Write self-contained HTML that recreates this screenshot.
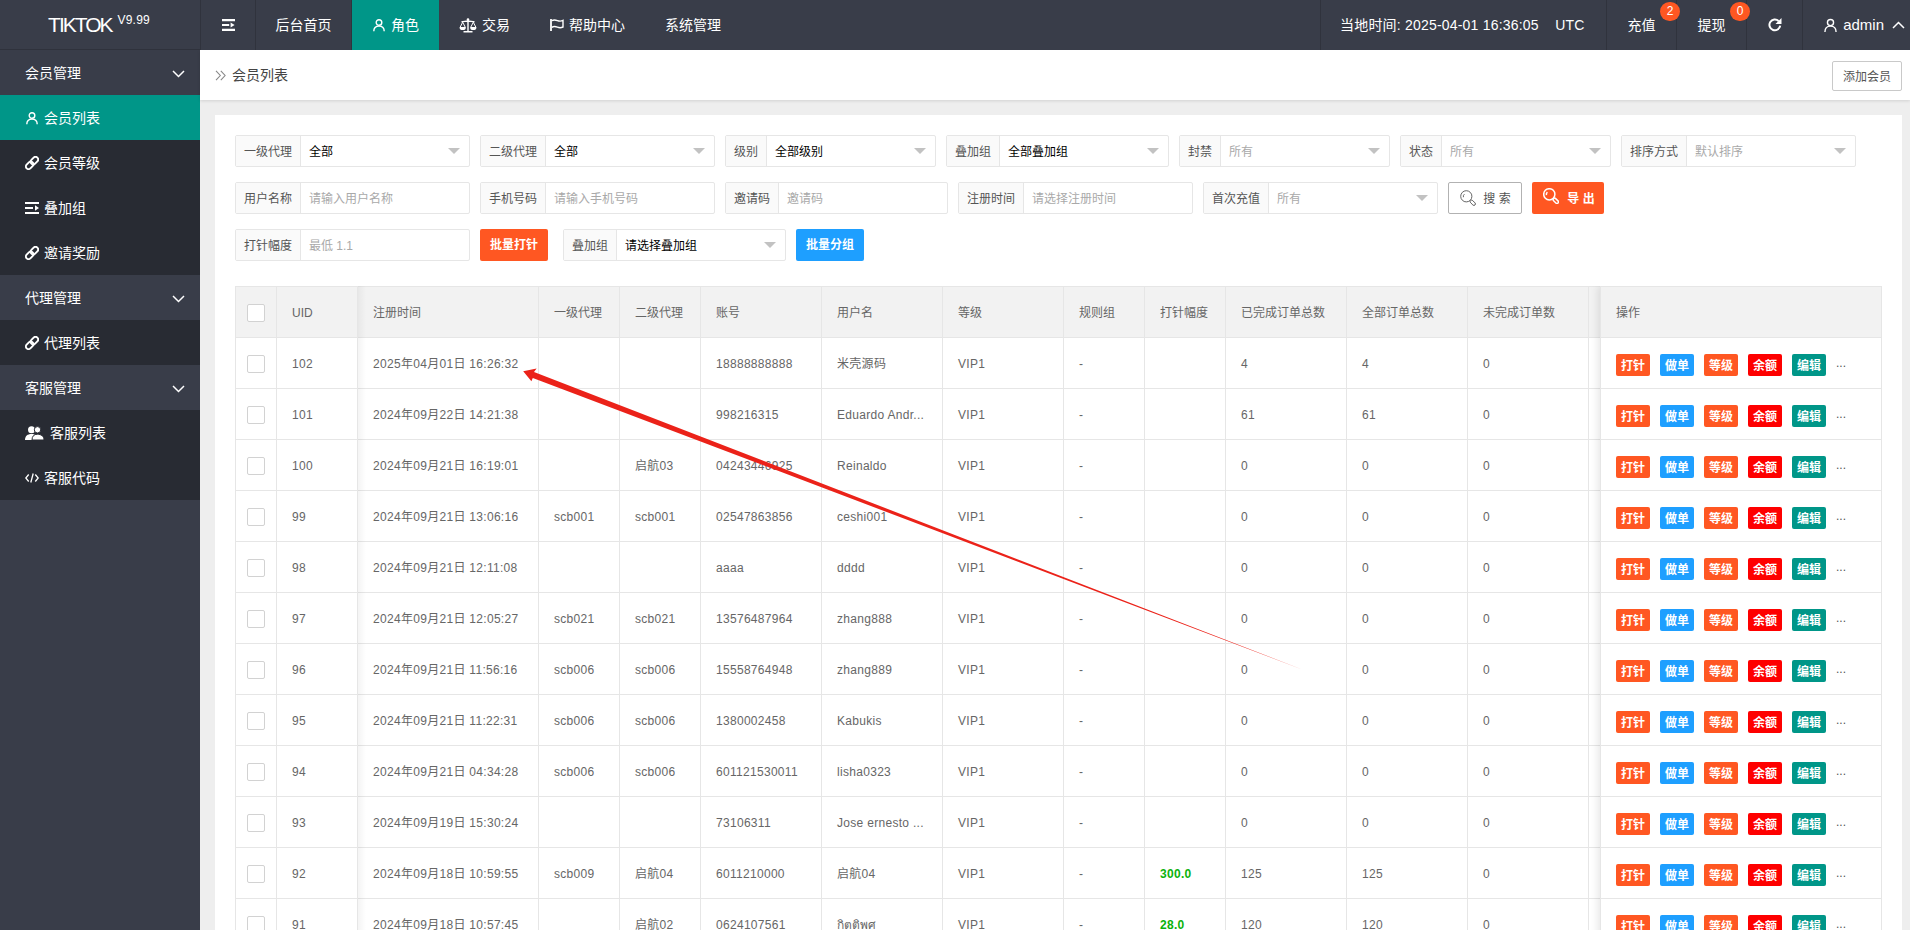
<!DOCTYPE html>
<html lang="zh-CN">
<head>
<meta charset="utf-8">
<title>会员列表</title>
<style>
*{box-sizing:border-box;margin:0;padding:0}
html,body{width:1910px;height:930px;overflow:hidden}
body{font-family:"Liberation Sans","Noto Sans CJK SC",sans-serif;font-size:12px;color:#333;background:#eee;position:relative}
svg{display:block}
a{color:inherit;text-decoration:none}
/* ---------- header ---------- */
.hd{position:absolute;left:0;top:0;width:1910px;height:50px;background:#393d49;color:#fff;font-size:14px;z-index:10}
.logo{position:absolute;left:0;top:0;width:200px;height:50px;text-align:center;line-height:49px;font-size:21px;letter-spacing:-2px;padding-right:2px;border-bottom:1px solid #2f323c}
.logo sup{font-size:12px;letter-spacing:.2px;position:relative;top:0px;margin-left:6px;vertical-align:super;line-height:0}
.nav{position:absolute;top:0;height:50px;line-height:50px;white-space:nowrap;text-align:center}
.nav.bl{border-left:1px solid #30333d}
.nav.br{border-right:1px solid #30333d}
.nav.on{background:#009688}
.nav.l{text-align:left}
.nav svg{display:inline-block;vertical-align:middle;position:relative;top:-1px}
.badge{position:absolute;width:20px;height:19px;border-radius:9.500px;background:#ff5722;color:#fff;font-size:12px;line-height:19px;text-align:center;top:1.500px}
/* ---------- sidebar ---------- */
.side{position:absolute;left:0;top:50px;width:200px;height:880px;background:#393d49;color:#fff;font-size:14px}
.side .it{position:absolute;left:0;width:200px;height:45px;line-height:46px;padding-left:25px;white-space:nowrap}
.side .sub{background:#282b33}
.side .on{background:#009688}
.side .it svg{display:inline-block;vertical-align:middle;position:relative;top:-1px;margin-right:5px}
.side .it svg.chev{position:absolute;left:172px;top:20px;margin:0}
/* ---------- breadcrumb ---------- */
.crumb{position:absolute;left:200px;top:50px;width:1710px;height:50px;background:#fff;box-shadow:0 1px 3px rgba(0,0,0,.12);font-size:14px;color:#444;line-height:50px}
.crumb .t{position:absolute;left:32px;top:0}
.crumb .add{position:absolute;left:1632px;top:11px;width:70px;height:30px;border:1px solid #c9c9c9;border-radius:2px;background:#fff;color:#555;font-size:12px;line-height:31px;text-align:center}
/* ---------- card ---------- */
.card{position:absolute;left:215px;top:115px;width:1687px;height:830px;background:#fff}
/* ---------- filters ---------- */
.fg{position:absolute;height:32px;border:1px solid #e6e6e6;border-radius:2px;background:#fff}
.fg label{position:absolute;left:0;top:0;height:30px;line-height:32px;background:#fafafa;border-right:1px solid #e6e6e6;text-align:center;color:#555;font-size:12px;padding-right:0}
.fg .inp{position:absolute;right:0;top:0;width:169px;height:30px;line-height:32px;padding-left:9px;color:#000;white-space:nowrap}
.fg .inp.ph{color:#a9a9a9}
.tri{position:absolute;right:9px;top:12px;width:0;height:0;border:6px solid transparent;border-top-color:#c2c2c2;border-bottom-width:0}
.btn{position:absolute;height:32px;line-height:32px;border-radius:2px;text-align:center;font-size:12px;white-space:nowrap;color:#fff;font-weight:bold}
.btn svg{display:inline-block;vertical-align:middle;margin-right:6px;position:relative;top:-1px}
.btn span{position:relative}
.btn.pri span{left:1px;top:1px}
.btn.pri{background:#fff;border:1px solid #b2b2b2;color:#555;line-height:30px;font-weight:normal}
.btn.dan{background:#ff5722}
.btn.nor{background:#1e9fff}
/* ---------- table ---------- */
.tb{position:absolute;border-collapse:separate;border-spacing:0;table-layout:fixed;border-left:1px solid #e6e6e6;border-top:1px solid #e6e6e6;color:#666;font-size:12px;background:#fff}
.tb th,.tb td{height:51px;line-height:20px;letter-spacing:.3px;border-right:1px solid #e6e6e6;border-bottom:1px solid #e6e6e6;padding:2px 0 0 15px;text-align:left;font-weight:normal;white-space:nowrap;overflow:hidden;vertical-align:middle}
.tb th{background:#f2f2f2;letter-spacing:0}
.tb .ck{padding:0;text-align:center}
.cb{display:inline-block;width:18px;height:18px;border:1px solid #d2d2d2;border-radius:2px;background:#fff;vertical-align:middle;position:relative;top:0}
.tb b.g{color:#0bb20c;font-weight:bold}
.shl{position:absolute;width:8px;height:760px;background:linear-gradient(to right,rgba(0,0,0,.045),rgba(0,0,0,0))}
.tb.fr{box-shadow:-2px 0 8px rgba(0,0,0,.1);clip-path:inset(0 0 0 -12px)}
.tb.fr td{padding-top:3px}
.b{display:inline-block;width:34px;height:22px;line-height:24px;letter-spacing:0;border-radius:2px;color:#fff;font-weight:bold;text-align:center;margin-right:10px;vertical-align:middle}
.b.dan{background:#ff5722}.b.nor{background:#1e9fff}.b.org{background:#ff5722}.b.red{background:#fe0000}.b.grn{background:#009688}
.more{vertical-align:middle;color:#555;letter-spacing:0;position:relative;top:-2px}
</style>
</head>
<body>

<div class="hd">
  <div class="logo">TIKTOK<sup>V9.99</sup></div>
  <div class="nav bl br" style="left:200px;width:56px">
    <svg width="13" height="12" viewBox="0 0 13 12" style="position:absolute;left:21px;top:19px"><path d="M0 0h13v2.200H0zM0 5h7.200v2.100H0zM0 9.700h13v2.300H0zM8.600 3.600l4 2.400-4 2.400z" fill="#fff"/></svg>
  </div>
  <div class="nav br" style="left:256px;width:96px">后台首页</div>
  <div class="nav on l" style="left:352px;width:87px;padding-left:21px">
    <svg width="12" height="13" viewBox="0 0 12 13" style="margin-right:6px;top:-1px"><circle cx="6" cy="3.500" r="2.800" fill="none" stroke="#fff" stroke-width="1.400"/><path d="M.8 12.300c0-3.300 2.100-5.200 5.200-5.200s5.200 1.900 5.200 5.200" fill="none" stroke="#fff" stroke-width="1.400"/></svg>角色</div>
  <div class="nav l" style="left:439px;width:91px;padding-left:20px">
    <svg width="18" height="15" viewBox="0 0 18 15" style="margin-right:5px;top:-1px"><path d="M9 1.500v12M4.500 13.800h9M2.500 3.800c2.500 0 4-.8 6.500-.8s4 .8 6.500 .8" fill="none" stroke="#fff" stroke-width="1.400"/><circle cx="9" cy="1.600" r="1.300" fill="#fff"/><path d="M3.700 4.200L1 9.500h5.400zM14.300 4.200l-2.700 5.300H17z" fill="none" stroke="#fff" stroke-width="1" stroke-linejoin="round"/><path d="M.6 9.500a3.100 2.600 0 0 0 6.200 0zM11.200 9.500a3.100 2.600 0 0 0 6.200 0z" fill="#fff"/></svg>交易</div>
  <div class="nav l" style="left:530px;width:115px;padding-left:20px">
    <svg width="14" height="12" viewBox="0 0 14 12" style="margin-right:5px;top:-1px"><path d="M1 0v12" stroke="#fff" stroke-width="1.800" fill="none"/><path d="M1.800 1.800c2-1.400 3.600-1 5.600-.2s3.600 .8 5.600 -.2v6.600c-2 1-3.600 1-5.600 .2s-3.600 -1.200 -5.600 .2" fill="none" stroke="#fff" stroke-width="1.400"/></svg>帮助中心</div>
  <div class="nav" style="left:645px;width:96px">系统管理</div>

  <div class="nav bl br l" style="left:1320px;width:287px;padding-left:19px;letter-spacing:.2px">当地时间: 2025-04-01 16:36:05&nbsp;&nbsp;&nbsp;&nbsp;UTC</div>
  <div class="nav br" style="left:1607px;width:70px">充值</div>
  <div class="badge" style="left:1660px">2</div>
  <div class="nav br" style="left:1677px;width:70px">提现</div>
  <div class="badge" style="left:1730px">0</div>
  <div class="nav br" style="left:1747px;width:56px">
    <svg width="16" height="16" viewBox="0 0 16 16" style="top:-1px"><path d="M13.200 8.600A5.400 5.400 0 1 1 11.600 4" fill="none" stroke="#fff" stroke-width="2"/><path d="M14.500 1v6h-6z" fill="#fff"/></svg>
  </div>
  <div class="nav" style="left:1803px;width:107px;text-align:left;padding-left:21px;font-size:15px">
    <svg width="13" height="15" viewBox="0 0 14 15" style="margin-right:2px"><circle cx="7" cy="4.300" r="3.300" fill="none" stroke="#fff" stroke-width="1.500"/><path d="M1 14.500c0-4 2.600-6.300 6-6.300s6 2.300 6 6.300" fill="none" stroke="#fff" stroke-width="1.500"/></svg>
    admin
    <svg width="13" height="8" viewBox="0 0 13 8" style="margin-left:4px"><path d="M1 7l5.500-5.500L12 7" fill="none" stroke="#fff" stroke-width="1.500"/></svg>
  </div>
</div>

<div class="side">
  <div class="it" style="top:0">会员管理<svg class="chev" width="13" height="8" viewBox="0 0 13 8"><path d="M1 1l5.500 5.500L12 1" fill="none" stroke="#fff" stroke-width="1.500"/></svg></div>
  <div class="it sub on" style="top:45px"><svg width="12" height="13" viewBox="0 0 12 13" style="margin-left:1px;margin-right:6px"><circle cx="6" cy="3.500" r="2.800" fill="none" stroke="#fff" stroke-width="1.400"/><path d="M.8 12.300c0-3.300 2.100-5.200 5.200-5.200s5.200 1.900 5.200 5.200" fill="none" stroke="#fff" stroke-width="1.400"/></svg>会员列表</div>
  <div class="it sub" style="top:90px"><svg width="14" height="14" viewBox="0 0 15 15"><g transform="rotate(-45 7.500 7.500)" fill="none" stroke="#fff" stroke-width="2.100"><rect x="-.6" y="4.700" width="9" height="5.600" rx="2.800"/><rect x="6.600" y="4.700" width="9" height="5.600" rx="2.800"/></g></svg>会员等级</div>
  <div class="it sub" style="top:135px"><svg width="14" height="12" viewBox="0 0 14 12" style="top:-1px"><path d="M0 0h14v2H0zM0 5h8v2H0zM0 10h14v2H0zM10 3.200l4 2.800-4 2.800z" fill="#fff"/></svg>叠加组</div>
  <div class="it sub" style="top:180px"><svg width="14" height="14" viewBox="0 0 15 15"><g transform="rotate(-45 7.500 7.500)" fill="none" stroke="#fff" stroke-width="2.100"><rect x="-.6" y="4.700" width="9" height="5.600" rx="2.800"/><rect x="6.600" y="4.700" width="9" height="5.600" rx="2.800"/></g></svg>邀请奖励</div>
  <div class="it" style="top:225px">代理管理<svg class="chev" width="13" height="8" viewBox="0 0 13 8"><path d="M1 1l5.500 5.500L12 1" fill="none" stroke="#fff" stroke-width="1.500"/></svg></div>
  <div class="it sub" style="top:270px"><svg width="14" height="14" viewBox="0 0 15 15"><g transform="rotate(-45 7.500 7.500)" fill="none" stroke="#fff" stroke-width="2.100"><rect x="-.6" y="4.700" width="9" height="5.600" rx="2.800"/><rect x="6.600" y="4.700" width="9" height="5.600" rx="2.800"/></g></svg>代理列表</div>
  <div class="it" style="top:315px">客服管理<svg class="chev" width="13" height="8" viewBox="0 0 13 8"><path d="M1 1l5.500 5.500L12 1" fill="none" stroke="#fff" stroke-width="1.500"/></svg></div>
  <div class="it sub" style="top:360px"><svg width="19" height="14" viewBox="0 0 19 14" style="margin-right:6px"><g fill="#fff"><circle cx="6.500" cy="3.800" r="3.500"/><path d="M0 14c0-4 2.500-6 6.500-6s6.500 2 6.500 6z"/><circle cx="12.500" cy="3.800" r="3.200" stroke="#282b33" stroke-width="1"/><path d="M7 14c0-3.800 2-5.800 5.500-5.800S19 10.200 19 14z" stroke="#282b33" stroke-width="1"/></g></svg>客服列表</div>
  <div class="it sub" style="top:405px"><svg width="14" height="10" viewBox="0 0 14 10"><path d="M3.700 1.500L.8 5l2.900 3.500M10.300 1.500L13.200 5l-2.900 3.500M8.200.5L5.800 9.500" fill="none" stroke="#fff" stroke-width="1.300"/></svg>客服代码</div>
</div>

<div class="crumb">
  <svg width="11" height="11" viewBox="0 0 11 11" style="position:absolute;left:15px;top:20px"><path d="M1 .8L5.300 5.500 1 10.200M5.800 .8l4.300 4.700-4.300 4.700" fill="none" stroke="#888" stroke-width="1.100"/></svg>
  <span class="t">会员列表</span>
  <div class="add">添加会员</div>
</div>

<div class="card">
<!--F0-->
<div class="fg" style="left:20px;top:20px;width:235px"><label style="width:65px">一级代理</label><div class="inp sel">全部<i class="tri"></i></div></div>
<div class="fg" style="left:265px;top:20px;width:235px"><label style="width:65px">二级代理</label><div class="inp sel">全部<i class="tri"></i></div></div>
<div class="fg" style="left:510px;top:20px;width:211px"><label style="width:41px">级别</label><div class="inp sel">全部级别<i class="tri"></i></div></div>
<div class="fg" style="left:731px;top:20px;width:223px"><label style="width:53px">叠加组</label><div class="inp sel">全部叠加组<i class="tri"></i></div></div>
<div class="fg" style="left:964px;top:20px;width:211px"><label style="width:41px">封禁</label><div class="inp sel ph">所有<i class="tri"></i></div></div>
<div class="fg" style="left:1185px;top:20px;width:211px"><label style="width:41px">状态</label><div class="inp sel ph">所有<i class="tri"></i></div></div>
<div class="fg" style="left:1406px;top:20px;width:235px"><label style="width:65px">排序方式</label><div class="inp sel ph">默认排序<i class="tri"></i></div></div>
<div class="fg" style="left:20px;top:67px;width:235px"><label style="width:65px">用户名称</label><div class="inp ph">请输入用户名称</div></div>
<div class="fg" style="left:265px;top:67px;width:235px"><label style="width:65px">手机号码</label><div class="inp ph">请输入手机号码</div></div>
<div class="fg" style="left:510px;top:67px;width:223px"><label style="width:53px">邀请码</label><div class="inp ph">邀请码</div></div>
<div class="fg" style="left:743px;top:67px;width:235px"><label style="width:65px">注册时间</label><div class="inp ph">请选择注册时间</div></div>
<div class="fg" style="left:988px;top:67px;width:235px"><label style="width:65px">首次充值</label><div class="inp sel ph">所有<i class="tri"></i></div></div>
<div class="btn pri" style="left:1233px;top:67px;width:74px"><svg width="16" height="16" viewBox="0 0 16 16" style="top:-1px"><circle cx="6.300" cy="6.300" r="5.600" fill="none" stroke="#555" stroke-width="0.9"/><path d="M3.400 7.200a3 3 0 0 1 1-3" fill="none" stroke="#555" stroke-width="0.9"/><rect x="-1.500" y="0" width="3" height="6.200" rx="1.500" transform="translate(10.600 10.600) rotate(-45)" fill="none" stroke="#555" stroke-width="0.9"/></svg><span>搜 索</span></div>
<div class="btn dan" style="left:1317px;top:67px;width:72px"><svg width="16" height="16" viewBox="0 0 16 16" style="top:-3px"><circle cx="6.300" cy="6.300" r="5.600" fill="none" stroke="#fff" stroke-width="1.5"/><path d="M3.400 7.200a3 3 0 0 1 1-3" fill="none" stroke="#fff" stroke-width="1.5"/><rect x="-1.500" y="0" width="3" height="6.200" rx="1.500" transform="translate(10.600 10.600) rotate(-45)" fill="none" stroke="#fff" stroke-width="1.5"/></svg><span style="left:2px;top:.5px">导 出</span></div>
<div class="fg" style="left:20px;top:114px;width:235px"><label style="width:65px">打针幅度</label><div class="inp ph">最低 1.1</div></div>
<div class="btn dan" style="left:265px;top:114px;width:68px"><span>批量打针</span></div>
<div class="fg" style="left:348px;top:114px;width:223px"><label style="width:53px">叠加组</label><div class="inp sel">请选择叠加组<i class="tri"></i></div></div>
<div class="btn nor" style="left:581px;top:114px;width:68px"><span>批量分组</span></div>
<!--F1-->
<!--T0-->
<table class="tb" style="left:20px;top:171px;width:1414px"><colgroup>
<col style="width:41px">
<col style="width:81px">
<col style="width:181px">
<col style="width:81px">
<col style="width:81px">
<col style="width:121px">
<col style="width:121px">
<col style="width:121px">
<col style="width:81px">
<col style="width:81px">
<col style="width:121px">
<col style="width:121px">
<col style="width:121px">
<col style="width:60px"></colgroup>
<thead><tr>
<th class="ck"><i class="cb"></i></th>
<th>UID</th>
<th>注册时间</th>
<th>一级代理</th>
<th>二级代理</th>
<th>账号</th>
<th>用户名</th>
<th>等级</th>
<th>规则组</th>
<th>打针幅度</th>
<th>已完成订单总数</th>
<th>全部订单总数</th>
<th>未完成订单数</th>
<th></th></tr></thead><tbody>
<tr><td class="ck"><i class="cb"></i></td><td>102</td><td>2025年04月01日 16:26:32</td><td></td><td></td><td>18888888888</td><td>米壳源码</td><td>VIP1</td><td>-</td><td></td><td>4</td><td>4</td><td>0</td><td></td></tr>
<tr><td class="ck"><i class="cb"></i></td><td>101</td><td>2024年09月22日 14:21:38</td><td></td><td></td><td>998216315</td><td>Eduardo Andr...</td><td>VIP1</td><td>-</td><td></td><td>61</td><td>61</td><td>0</td><td></td></tr>
<tr><td class="ck"><i class="cb"></i></td><td>100</td><td>2024年09月21日 16:19:01</td><td></td><td>启航03</td><td>04243446925</td><td>Reinaldo</td><td>VIP1</td><td>-</td><td></td><td>0</td><td>0</td><td>0</td><td></td></tr>
<tr><td class="ck"><i class="cb"></i></td><td>99</td><td>2024年09月21日 13:06:16</td><td>scb001</td><td>scb001</td><td>02547863856</td><td>ceshi001</td><td>VIP1</td><td>-</td><td></td><td>0</td><td>0</td><td>0</td><td></td></tr>
<tr><td class="ck"><i class="cb"></i></td><td>98</td><td>2024年09月21日 12:11:08</td><td></td><td></td><td>aaaa</td><td>dddd</td><td>VIP1</td><td>-</td><td></td><td>0</td><td>0</td><td>0</td><td></td></tr>
<tr><td class="ck"><i class="cb"></i></td><td>97</td><td>2024年09月21日 12:05:27</td><td>scb021</td><td>scb021</td><td>13576487964</td><td>zhang888</td><td>VIP1</td><td>-</td><td></td><td>0</td><td>0</td><td>0</td><td></td></tr>
<tr><td class="ck"><i class="cb"></i></td><td>96</td><td>2024年09月21日 11:56:16</td><td>scb006</td><td>scb006</td><td>15558764948</td><td>zhang889</td><td>VIP1</td><td>-</td><td></td><td>0</td><td>0</td><td>0</td><td></td></tr>
<tr><td class="ck"><i class="cb"></i></td><td>95</td><td>2024年09月21日 11:22:31</td><td>scb006</td><td>scb006</td><td>1380002458</td><td>Kabukis</td><td>VIP1</td><td>-</td><td></td><td>0</td><td>0</td><td>0</td><td></td></tr>
<tr><td class="ck"><i class="cb"></i></td><td>94</td><td>2024年09月21日 04:34:28</td><td>scb006</td><td>scb006</td><td>601121530011</td><td>lisha0323</td><td>VIP1</td><td>-</td><td></td><td>0</td><td>0</td><td>0</td><td></td></tr>
<tr><td class="ck"><i class="cb"></i></td><td>93</td><td>2024年09月19日 15:30:24</td><td></td><td></td><td>73106311</td><td>Jose ernesto ...</td><td>VIP1</td><td>-</td><td></td><td>0</td><td>0</td><td>0</td><td></td></tr>
<tr><td class="ck"><i class="cb"></i></td><td>92</td><td>2024年09月18日 10:59:55</td><td>scb009</td><td>启航04</td><td>6011210000</td><td>启航04</td><td>VIP1</td><td>-</td><td><b class="g">300.0</b></td><td>125</td><td>125</td><td>0</td><td></td></tr>
<tr><td class="ck"><i class="cb"></i></td><td>91</td><td>2024年09月18日 10:57:45</td><td></td><td>启航02</td><td>0624107561</td><td><span style="letter-spacing:0">กิตติพศ</span></td><td>VIP1</td><td>-</td><td><b class="g">28.0</b></td><td>120</td><td>120</td><td>0</td><td></td></tr>
</tbody></table>
<div class="shl" style="left:143px;top:171px"></div>
<table class="tb fr" style="left:1385px;top:171px;width:282px"><thead><tr><th>操作</th></tr></thead><tbody>
<tr><td><span class="b dan">打针</span><span class="b nor">做单</span><span class="b org">等级</span><span class="b red">余额</span><span class="b grn">编辑</span><span class="more">...</span></td></tr>
<tr><td><span class="b dan">打针</span><span class="b nor">做单</span><span class="b org">等级</span><span class="b red">余额</span><span class="b grn">编辑</span><span class="more">...</span></td></tr>
<tr><td><span class="b dan">打针</span><span class="b nor">做单</span><span class="b org">等级</span><span class="b red">余额</span><span class="b grn">编辑</span><span class="more">...</span></td></tr>
<tr><td><span class="b dan">打针</span><span class="b nor">做单</span><span class="b org">等级</span><span class="b red">余额</span><span class="b grn">编辑</span><span class="more">...</span></td></tr>
<tr><td><span class="b dan">打针</span><span class="b nor">做单</span><span class="b org">等级</span><span class="b red">余额</span><span class="b grn">编辑</span><span class="more">...</span></td></tr>
<tr><td><span class="b dan">打针</span><span class="b nor">做单</span><span class="b org">等级</span><span class="b red">余额</span><span class="b grn">编辑</span><span class="more">...</span></td></tr>
<tr><td><span class="b dan">打针</span><span class="b nor">做单</span><span class="b org">等级</span><span class="b red">余额</span><span class="b grn">编辑</span><span class="more">...</span></td></tr>
<tr><td><span class="b dan">打针</span><span class="b nor">做单</span><span class="b org">等级</span><span class="b red">余额</span><span class="b grn">编辑</span><span class="more">...</span></td></tr>
<tr><td><span class="b dan">打针</span><span class="b nor">做单</span><span class="b org">等级</span><span class="b red">余额</span><span class="b grn">编辑</span><span class="more">...</span></td></tr>
<tr><td><span class="b dan">打针</span><span class="b nor">做单</span><span class="b org">等级</span><span class="b red">余额</span><span class="b grn">编辑</span><span class="more">...</span></td></tr>
<tr><td><span class="b dan">打针</span><span class="b nor">做单</span><span class="b org">等级</span><span class="b red">余额</span><span class="b grn">编辑</span><span class="more">...</span></td></tr>
<tr><td><span class="b dan">打针</span><span class="b nor">做单</span><span class="b org">等级</span><span class="b red">余额</span><span class="b grn">编辑</span><span class="more">...</span></td></tr>
</tbody></table>
<!--T1-->
</div>
<svg width="1910" height="930" viewBox="0 0 1910 930" style="position:absolute;left:0;top:0;z-index:20;pointer-events:none">
<polygon points="523.2,371.2 536.6,368.600 534,372.100 780,467.200 1020,560.300 1303.500,670 1020,562.500 780,471.600 532.800,377.900 531.400,381.300" fill="#eb2219"/>
</svg>
</body>
</html>
